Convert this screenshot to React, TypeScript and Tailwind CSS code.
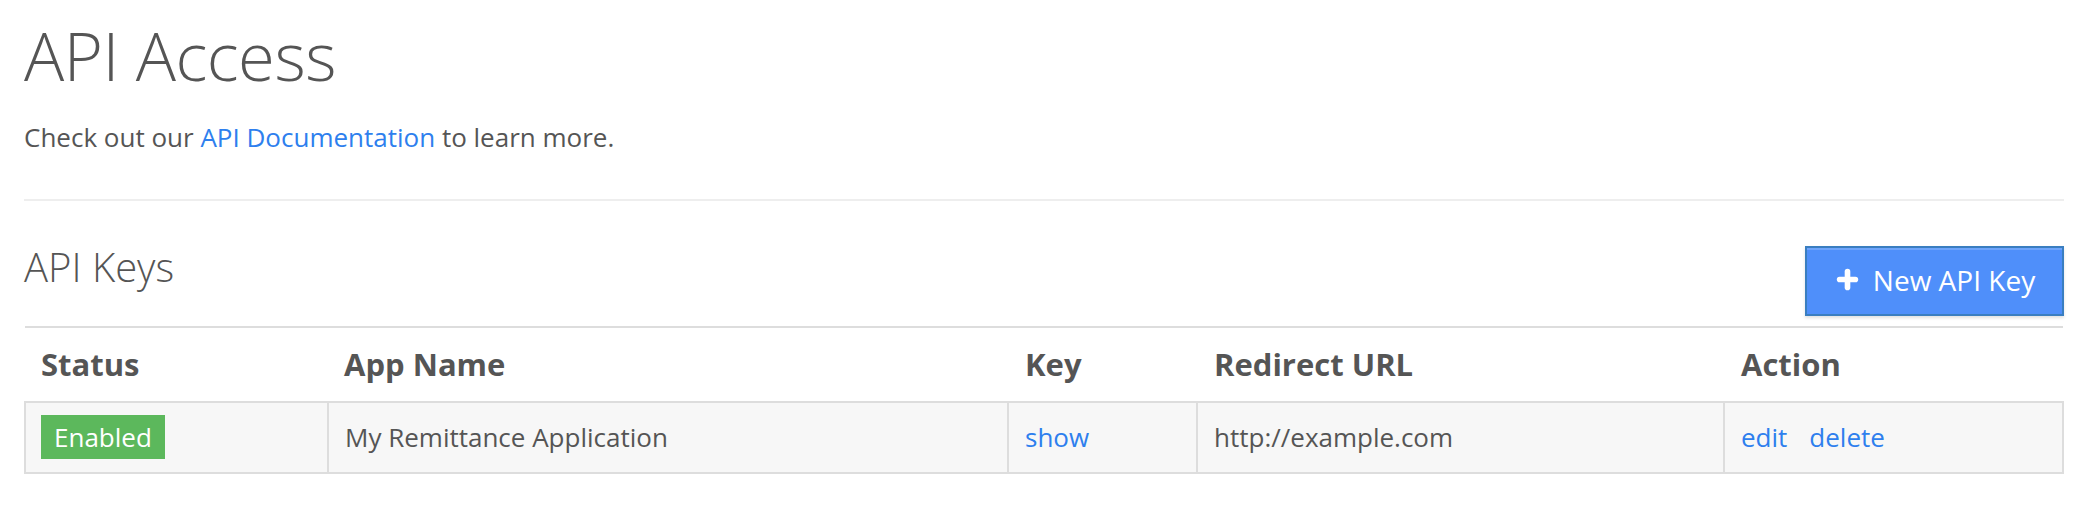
import { Plus } from "lucide-react";

const font = { fontFamily: '"Open Sans", "Noto Sans", sans-serif' };

export default function App() {
  return (
    <div className="min-h-screen bg-white px-6 pt-[19px] text-[#555]" style={font}>
      {/* header */}
      <h1 className="text-[67px] font-light leading-[1.1] tracking-[-0.5px]">API Access</h1>
      <p className="mt-[26px] text-[26px] leading-[36px]">
        Check out our <a className="text-[#2e7fee]">API Documentation</a> to learn more.
      </p>
      <hr className="mt-[44px] border-0 border-t-2 border-[#eee]" />

      {/* keys */}
      <div className="flex items-end justify-between pt-[42px]">
        <h2 className="mb-[25px] text-[40px] font-light leading-[48px]">API Keys</h2>
        <button className="flex h-[70px] w-[259px] items-center justify-center gap-3 border-2 border-[#3a7ec0] bg-[#4f8ffa] pb-[2px] text-[28px] text-white shadow-[inset_0_2px_0_#6fa4fb,0_2px_3px_rgba(0,0,0,0.12)]">
          <Plus className="h-[27px] w-[27px]" strokeWidth={5} />
          New API Key
        </button>
      </div>

      <table className="mt-[10px] w-full border-collapse">
        <thead>
          <tr className="border-t-2 border-[#ddd] text-left text-[31px] font-bold">
            <th className="h-[75px] w-[303px] px-[16px]">Status</th>
            <th className="w-[680px] px-[16px]">App Name</th>
            <th className="w-[189px] px-[17px]">Key</th>
            <th className="w-[527px] px-[17px]">Redirect URL</th>
            <th className="px-[17px]">Action</th>
          </tr>
        </thead>
        <tbody>
          <tr className="bg-[#f7f7f7] text-[26px]">
            <td className="h-[71px] border-2 border-[#ddd] px-[15px]">
              <span className="inline-block bg-[#5cb85c] px-[13px] py-[2px] font-medium leading-[40px] text-white">Enabled</span>
            </td>
            <td className="border-2 border-[#ddd] px-[16px]">My Remittance Application</td>
            <td className="border-2 border-[#ddd] px-[16px]">
              <a className="text-[#2e7fee]">show</a>
            </td>
            <td className="border-2 border-[#ddd] px-[16px]">http://example.com</td>
            <td className="border-2 border-[#ddd] px-[16px]">
              <a className="text-[#2e7fee]">edit</a>
              <a className="ml-[22px] text-[#2e7fee]">delete</a>
            </td>
          </tr>
        </tbody>
      </table>
    </div>
  );
}
